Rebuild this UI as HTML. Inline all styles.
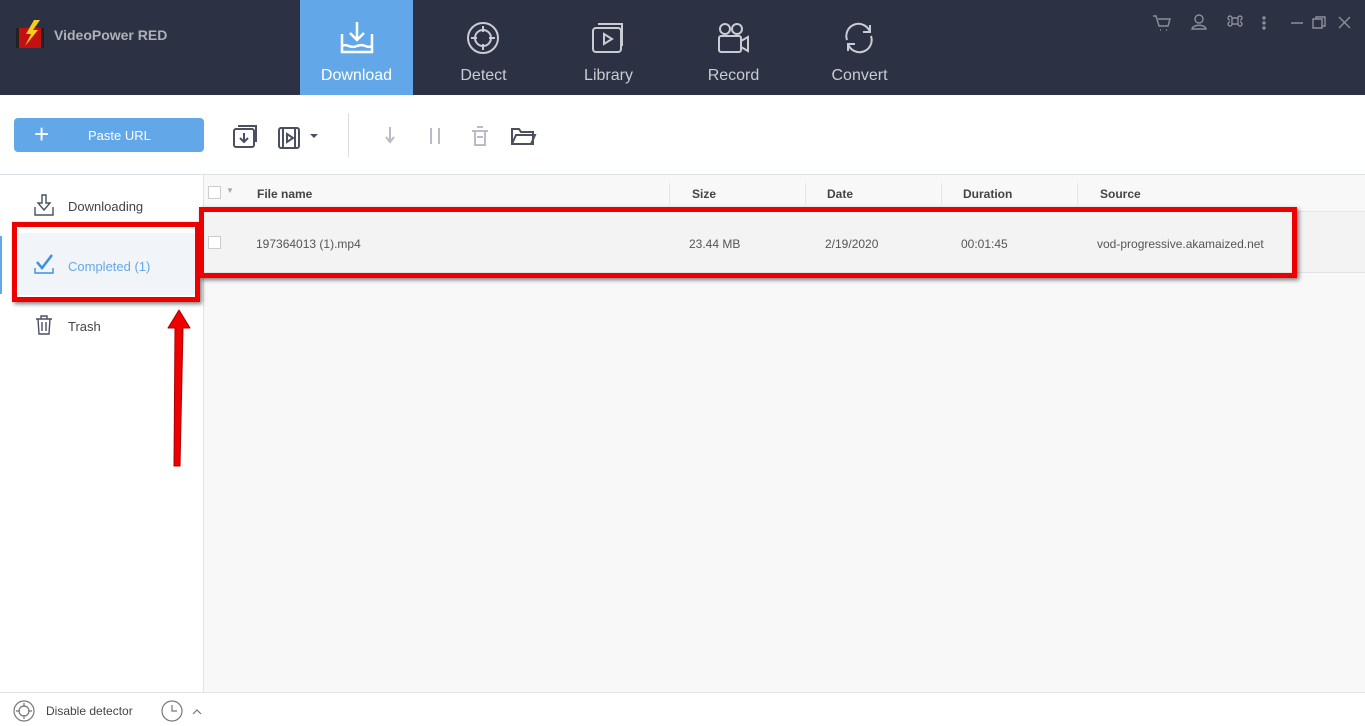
<!DOCTYPE html>
<html><head><meta charset="utf-8"><style>
*{margin:0;padding:0;box-sizing:border-box}
body{width:1365px;height:726px;overflow:hidden;font-family:"Liberation Sans",sans-serif;background:#fff;position:relative}
.abs{position:absolute}
.hdr{left:0;top:0;width:1365px;height:95px;background:#2c3244}
.tab{top:0;width:113px;height:95px;color:#c9ccd3;font-size:16px;text-align:center}
.tab span{position:absolute;left:0;right:0;top:67px}
.tab svg{position:absolute;left:38px;top:20px}
.txt{font-size:13px;color:#444}
</style></head><body>
<div class="abs hdr"></div>
<svg class="abs" style="left:14px;top:18px" width="34" height="34" viewBox="0 0 34 34"><rect x="2" y="10" width="28" height="20" fill="#c41010"/><rect x="2" y="10" width="3" height="20" fill="#222"/><rect x="27" y="10" width="3" height="20" fill="#222"/><path d="M20 2 L12 16 L17 16 L11 28 L24 12 L19 12 L26 2Z" fill="#f5d018"/></svg>
<div class="abs" style="left:54px;top:27px;font-size:14px;font-weight:bold;color:#aeb1b8">VideoPower RED</div>
<div class="abs tab" style="left:300px;background:#62a8e8;color:#fff"><svg width="38" height="36" viewBox="0 0 38 36" fill="none" stroke="#fff" stroke-width="2.5"><path d="M19 2v18M12 13l7 7 7-7"/><path d="M4 14v18h30V14"/><path d="M4 26c5-3 8 3 15 0s10 3 15 0"/></svg><span>Download</span></div>
<div class="abs tab" style="left:427px"><svg width="36" height="36" viewBox="0 0 36 36" fill="none" stroke="#c9ccd3" stroke-width="2"><circle cx="18" cy="18" r="15"/><circle cx="18" cy="18" r="8"/><path d="M18 6v6M18 24v6M6 18h6M24 18h6"/></svg><span>Detect</span></div>
<div class="abs tab" style="left:552px"><svg width="36" height="36" viewBox="0 0 36 36" fill="none" stroke="#c9ccd3" stroke-width="2"><rect x="3" y="8" width="28" height="24" rx="3"/><path d="M8 4h24v22"/><path d="M14 14l8 5-8 5z"/></svg><span>Library</span></div>
<div class="abs tab" style="left:677px"><svg width="36" height="36" viewBox="0 0 36 36" fill="none" stroke="#c9ccd3" stroke-width="2"><circle cx="10" cy="9" r="5"/><circle cx="22" cy="9" r="5"/><rect x="4" y="16" width="22" height="16" rx="2"/><path d="M26 21l7-4v14l-7-4"/></svg><span>Record</span></div>
<div class="abs tab" style="left:803px"><svg width="36" height="36" viewBox="0 0 36 36" fill="none" stroke="#c9ccd3" stroke-width="2"><path d="M6 20A12 12 0 0 1 29 12M30 16A12 12 0 0 1 7 24"/><path d="M29 5v7h-7M7 31v-7h7"/></svg><span>Convert</span></div>
<svg class="abs" style="left:1150px;top:12px" width="210" height="22" viewBox="0 0 210 22" fill="none" stroke="#8b8f99" stroke-width="1.4"><path d="M3 4h3l3 10h9l2-7H8M10 18h1M16 18h1"/><circle cx="49" cy="7" r="4"/><path d="M42 17c1-5 13-5 14 0z"/><path d="M82 6h6v6h-6zM82 6a2 2 0 1 0-2 2M88 6a2 2 0 1 1 2 2M82 12a2 2 0 1 1-2-2M88 12a2 2 0 1 0 2-2"/><circle cx="114" cy="6" r="1" fill="#8b8f99"/><circle cx="114" cy="11" r="1" fill="#8b8f99"/><circle cx="114" cy="16" r="1" fill="#8b8f99"/><path d="M141 11h12M163 7h9v9h-9zM166 7V5h9v9h-3M189 5l11 11M200 5l-11 11"/></svg>
<div class="abs" style="left:14px;top:118px;width:190px;height:34px;background:#62a8e8;border-radius:4px;color:#fff;font-size:13px"><span style="position:absolute;left:20px;top:2px;font-size:26px;line-height:28px">+</span><span style="position:absolute;left:74px;top:10px">Paste URL</span></div>
<svg class="abs" style="left:232px;top:124px" width="110" height="26" viewBox="0 0 110 26" fill="none" stroke="#4a5060" stroke-width="2"><rect x="2" y="5" width="20" height="18" rx="2"/><path d="M6 2h18v16M12 9v9M8 14l4 4 4-4"/><rect x="47" y="4" width="20" height="20" rx="2"/><path d="M51 4v20M63 4v20M55 10l6 4-6 4z"/><path d="M78 10h8l-4 4z" fill="#4a5060" stroke="none"/></svg>
<div class="abs" style="left:348px;top:113px;width:1px;height:44px;background:#ddd"></div>
<svg class="abs" style="left:380px;top:124px" width="160" height="24" viewBox="0 0 160 24" fill="none" stroke-width="2"><path d="M10 3v14M6 13l4 5 4-5" stroke="#b8bcc4"/><path d="M51 4v16M59 4v16" stroke="#b8bcc4"/><path d="M92 7h16M95 7v14h10V7M97 3h6M97 13h6" stroke="#b8bcc4"/><path d="M132 20V5h7l2 3h12v12zM132 20l4-9h19l-4 9" stroke="#4a5060"/></svg>
<div class="abs" style="left:0;top:174px;width:1365px;height:1px;background:#dde1e6"></div>
<div class="abs" style="left:203px;top:175px;width:1px;height:517px;background:#e2e2e2"></div>
<div class="abs" style="left:204px;top:175px;width:1161px;height:517px;background:#f8f8f8"></div>
<svg class="abs" style="left:33px;top:193px" width="22" height="24" viewBox="0 0 22 24" fill="none" stroke="#4a5060" stroke-width="1.4"><path d="M9 2h4v8h4l-6 7-6-7h4z"/><path d="M2 14v8h18v-8"/></svg>
<div class="abs txt" style="left:68px;top:199px">Downloading</div>
<div class="abs" style="left:18px;top:233px;width:177px;height:62px;background:#f1f4f8"></div>
<div class="abs" style="left:0;top:236px;width:2px;height:58px;background:#62a8e8"></div>
<svg class="abs" style="left:33px;top:252px" width="22" height="24" viewBox="0 0 22 24" fill="none" stroke="#3d8fe0" stroke-width="2.5"><path d="M4 10l5 6 10-13"/><path d="M2 16v5h18v-5" stroke-width="1.4"/></svg>
<div class="abs txt" style="left:68px;top:259px;color:#62a8e8">Completed (1)</div>
<svg class="abs" style="left:34px;top:314px" width="20" height="22" viewBox="0 0 20 22" fill="none" stroke="#4a5060" stroke-width="1.4"><path d="M2 5h16M7 5V2h6v3M4 5l1 15h10l1-15M8 8v9M12 8v9"/></svg>
<div class="abs txt" style="left:68px;top:319px">Trash</div>
<div class="abs" style="left:12px;top:222px;width:188px;height:80px;border:5px solid #e00;box-shadow:2px 2px 4px rgba(0,0,0,.5)"></div>
<div class="abs" style="left:208px;top:186px;width:13px;height:13px;border:1px solid #ccc;background:#fff"></div>
<div class="abs" style="left:226px;top:186px;font-size:8px;color:#aaa">▼</div>
<div class="abs" style="left:204px;top:211px;width:1161px;height:1px;background:#e5e5e5"></div>
<div class="abs txt" style="left:257px;top:187px;font-weight:bold;font-size:12px">File name</div>
<div class="abs txt" style="left:692px;top:187px;font-weight:bold;font-size:12px">Size</div>
<div class="abs txt" style="left:827px;top:187px;font-weight:bold;font-size:12px">Date</div>
<div class="abs txt" style="left:963px;top:187px;font-weight:bold;font-size:12px">Duration</div>
<div class="abs txt" style="left:1100px;top:187px;font-weight:bold;font-size:12px">Source</div>
<div class="abs" style="left:669px;top:183px;width:1px;height:22px;background:#e5e5e5"></div>
<div class="abs" style="left:805px;top:183px;width:1px;height:22px;background:#e5e5e5"></div>
<div class="abs" style="left:941px;top:183px;width:1px;height:22px;background:#e5e5e5"></div>
<div class="abs" style="left:1077px;top:183px;width:1px;height:22px;background:#e5e5e5"></div>
<div class="abs" style="left:204px;top:212px;width:1161px;height:61px;background:#f3f3f3;border-bottom:1px solid #e2e2e2"></div>
<div class="abs" style="left:208px;top:236px;width:13px;height:13px;border:1px solid #ccc;background:#fff"></div>
<div class="abs txt" style="left:256px;top:237px;font-size:12px;color:#555">197364013 (1).mp4</div>
<div class="abs txt" style="left:689px;top:237px;font-size:12px;color:#555">23.44 MB</div>
<div class="abs txt" style="left:825px;top:237px;font-size:12px;color:#555">2/19/2020</div>
<div class="abs txt" style="left:961px;top:237px;font-size:12px;color:#555">00:01:45</div>
<div class="abs txt" style="left:1097px;top:237px;font-size:12px;color:#555">vod-progressive.akamaized.net</div>
<div class="abs" style="left:199px;top:207px;width:1098px;height:71px;border:5px solid #e00;box-shadow:2px 2px 4px rgba(0,0,0,.5)"></div>
<svg class="abs" style="left:164px;top:308px" width="30" height="162" viewBox="0 0 30 162"><path d="M15 2 L26 20 L19 20 L16 158 L10 158 L11 20 L4 20Z" fill="#e00" stroke="#a00" stroke-width="1" stroke-linejoin="round"/></svg>
<div class="abs" style="left:0;top:692px;width:1365px;height:1px;background:#e2e2e2"></div>
<svg class="abs" style="left:13px;top:699px" width="190" height="24" viewBox="0 0 190 24" fill="none" stroke="#777" stroke-width="1.2"><circle cx="11" cy="12" r="10"/><circle cx="11" cy="12" r="5"/><path d="M11 4v4M11 16v4M3 12h4M15 12h4"/><circle cx="159" cy="12" r="10"/><path d="M159 6v6h5"/><path d="M180 15l4-4 4 4"/></svg>
<div class="abs" style="left:46px;top:704px;font-size:12px;color:#444">Disable detector</div>
</body></html>
